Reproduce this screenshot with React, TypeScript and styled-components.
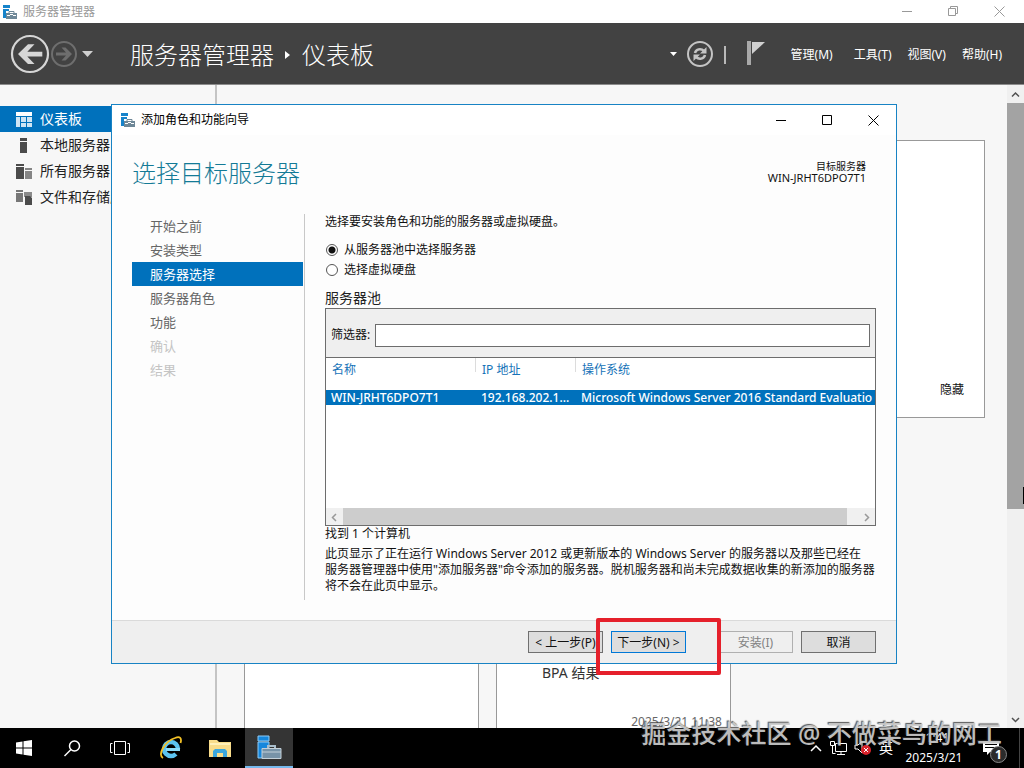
import React from 'react';
import styled, { createGlobalStyle, css } from 'styled-components';

const GlobalStyle = createGlobalStyle`
  * { box-sizing: border-box; }
  html, body { margin: 0; height: 100%; overflow: hidden; }
  body {
    font: 12px/16px "Noto Sans", "Noto Sans CJK SC", sans-serif;
    color: #111;
    background: #f7f7f7;
  }
  button, input { font: inherit; color: inherit; }
  #root { height: 100%; }
`;

const Desktop = styled.div`
  position: relative;
  display: flex;
  flex-direction: column;
  height: 100vh;
  overflow: hidden;
`;

const PlainButton = styled.button`
  display: flex;
  align-items: center;
  justify-content: center;
  padding: 0;
  border: 0;
  background: none;
`;

/* Title bars */
const TitleBar = styled.div`
  display: flex;
  align-items: center;
  flex: none;
  height: 23px;
  padding: 0 2px;
  gap: 6px;
  background: #fff;
  color: #999;
`;

const DialogTitleBar = styled(TitleBar)`
  height: 30px;
  padding: 0 0 0 8px;
  color: #000;
`;

const WindowButtons = styled.div`
  display: flex;
  margin-left: auto;
`;

const WindowButton = styled(PlainButton)`
  width: 46px;
  height: 22px;
`;

/* Server manager header */
const Header = styled.header`
  display: flex;
  align-items: center;
  flex: none;
  height: 62px;
  padding: 0 22px 0 10px;
  background: #424242;
  border-bottom: 1px solid #8c8c8c;
  color: #fff;
`;

const Breadcrumb = styled.h1`
  display: flex;
  align-items: center;
  gap: 11px;
  margin: 0 0 0 36px;
  padding-top: 2px;
  font-size: 24px;
  line-height: 32px;
  font-weight: 300;
`;

const HeaderTools = styled.div`
  display: flex;
  align-items: center;
  margin-left: auto;
  margin-right: 26px;
`;

const Menu = styled.nav`
  display: flex;
  gap: 16px;
  padding-top: 2px;
`;

const MenuItem = styled(PlainButton)`
  &:first-child { margin-right: 5px; }
`;

/* Body */
const Body = styled.div`
  display: flex;
  flex: 1;
  min-height: 0;
  overflow: hidden;
`;

const Sidebar = styled.nav`
  flex: none;
  width: 217px;
  padding-top: 21px;
  border-right: 2px solid #c4c4c4;
`;

const SideLink = styled.a<{ $active?: boolean }>`
  display: flex;
  align-items: center;
  gap: 8px;
  height: 26px;
  padding-left: 16px;
  font-size: 14px;
  color: ${p => (p.$active ? '#fff' : '#222')};
  background: ${p => (p.$active ? '#0071bc' : 'transparent')};
  text-decoration: none;
`;

const Content = styled.main`
  flex: 1;
  min-width: 0;
  padding: 55px 22px 0 27px;
`;

const Welcome = styled.section`
  display: flex;
  align-items: flex-end;
  justify-content: flex-end;
  height: 278px;
  padding: 19px 20px;
  border: 1px solid #999;
  background: #fff;
`;

const Tiles = styled.div`
  display: flex;
  gap: 17px;
  margin-top: 140px;
`;

const Tile = styled.article`
  display: flex;
  flex-direction: column;
  width: 235px;
  height: 180px;
  padding: 106px 8px 4px 45px;
  border: 1px solid #999;
  background: #fff;
  font-size: 14px;
  color: #333;
`;

const TileTime = styled.time`
  margin-top: 33px;
  text-align: right;
  font-size: 12px;
  color: #666;
`;

const VScroll = styled.div`
  display: flex;
  flex-direction: column;
  flex: none;
  width: 17px;
  background: #f0f0f0;
`;

const VThumb = styled.div`
  height: 406px;
  margin-bottom: auto;
  background: #a3a3a3;
`;

const ScrollButton = styled(PlainButton)`
  width: 17px;
  height: 18px;
`;

/* Wizard window */
const Dialog = styled.section`
  position: absolute;
  top: 104px;
  left: 111px;
  right: 127px;
  display: flex;
  flex-direction: column;
  border: 1px solid #1883c4;
  background: #fdfdfd;
`;

const DialogHead = styled.div`
  display: flex;
  justify-content: space-between;
  height: 79px;
  padding: 22px 30px 0 20px;
`;

const DialogTitle = styled.h2`
  margin: 0;
  font-size: 24px;
  line-height: 32px;
  font-weight: 300;
  color: #147a96;
`;

const Target = styled.div`
  display: flex;
  flex-direction: column;
  align-items: flex-end;
  padding-top: 3px;
  font-size: 11px;
  line-height: 12px;
`;

const TargetLabel = styled.span`
  font-size: 10px;
`;

const DialogBody = styled.div`
  display: flex;
  height: 406px;
  padding: 0 20px;
`;

const Steps = styled.ol`
  flex: none;
  width: 173px;
  height: 386px;
  margin: 0;
  padding: 0 1px 0 0;
  border-right: 1px solid #c8c8c8;
  list-style: none;
`;

const Step = styled.li<{ $state?: 'active' | 'disabled' }>`
  height: 24px;
  padding-left: 18px;
  font-size: 13px;
  line-height: 24px;
  color: #666;
  ${p => p.$state === 'active' && css`background: #0071bc; color: #fff;`}
  ${p => p.$state === 'disabled' && css`color: #c4c4c4;`}
`;

const Pane = styled.div`
  flex: 1;
  min-width: 0;
  padding-left: 20px;
`;

const Text = styled.p`
  margin: 0;
`;

const Choices = styled.div`
  display: flex;
  flex-direction: column;
  gap: 4px;
  margin: 12px 0;
`;

const Choice = styled.label`
  display: flex;
  align-items: center;
  gap: 6px;
  padding-left: 1px;
`;

const Radio = styled.input`
  appearance: none;
  width: 12px;
  height: 12px;
  margin: 0;
  border: 1px solid #555;
  border-radius: 50%;
  background: #fff;
  &:checked { background: radial-gradient(circle, #111 0 3px, #fff 4px); }
`;

const PoolTitle = styled.h3`
  margin: 0;
  font-size: 14px;
  line-height: 16px;
  font-weight: 400;
  padding-bottom: 2px;
  color: #222;
`;

const Pool = styled.div`
  height: 218px;
  display: flex;
  flex-direction: column;
  border: 1px solid #6d6d6d;
  background: #fff;
`;

const Filter = styled.label`
  display: flex;
  align-items: center;
  flex: none;
  gap: 5px;
  height: 49px;
  padding: 4px 5px 0;
  border-bottom: 1px solid #6d6d6d;
  background: #efefef;
`;

const FilterInput = styled.input`
  flex: 1;
  min-width: 0;
  height: 23px;
  border: 1px solid #6d6d6d;
  background: #fff;
`;

const TableView = styled.div`
  flex: 1;
  overflow: hidden;
`;

const ServerTable = styled.table`
  width: 100%;
  table-layout: fixed;
  border-collapse: collapse;
  th {
    height: 32px;
    padding: 4px 6px 0;
    vertical-align: top;
    text-align: left;
    font-weight: 400;
    color: #1673b8;
    background: linear-gradient(#dcdcdc, #dcdcdc) right top / 1px 14px no-repeat;
  }
  th:last-child { background: none; }
  td {
    height: 15px;
    padding: 0 5px;
    line-height: 15px;
    white-space: nowrap;
    overflow: hidden;
    font-weight: 500;
    color: #fff;
    background: #0071bc;
  }
  td:last-child { padding-right: 0; }
`;

const Col = styled.col<{ $width?: number }>`
  ${p => p.$width && css`width: ${p.$width}px;`}
`;

const HScroll = styled.div`
  display: flex;
  flex: none;
  height: 17px;
  background: #f0f0f0;
`;

const HThumb = styled.div`
  flex: 1;
  margin-right: 11px;
  background: #cdcdcd;
`;

const Note = styled.p`
  margin: 4px 0 0;
`;

const DialogFooter = styled.footer`
  display: flex;
  align-items: center;
  justify-content: flex-end;
  gap: 8px;
  height: 43px;
  padding: 0 20px;
  border-top: 1px solid #dadada;
  background: #efefef;
`;

const PushButton = styled.button<{ $primary?: boolean; $spaced?: boolean }>`
  width: 75px;
  height: 22px;
  padding: 2px 0 0;
  border: 1px solid ${p => (p.$primary ? '#0078d7' : '#707070')};
  background: #dddddd;
  white-space: nowrap;
  &:disabled { border-color: #b0b0b0; background: #efefef; color: #838383; }
  ${p => p.$spaced && css`margin-right: 24px;`}
`;

const Highlight = styled.div`
  position: absolute;
  left: 596px;
  top: 618px;
  width: 125px;
  height: 57px;
  border: 4px solid #e5202b;
  border-radius: 2px;
  pointer-events: none;
`;

/* Taskbar */
const Taskbar = styled.footer`
  display: flex;
  flex: none;
  height: 40px;
  background: #000;
  color: #fff;
`;

const Pinned = styled.div`
  display: flex;
  gap: 1px;
  margin-left: 3px;
`;

const TaskButton = styled(PlainButton)<{ $running?: boolean }>`
  width: 48px;
  ${p => p.$running && css`background: #343434; border-bottom: 2px solid #76b9ed;`}
`;

const Tray = styled.div`
  display: flex;
  align-items: center;
  gap: 7px;
  margin-left: auto;
`;

const InputMode = styled.span`
  font-size: 14px;
`;

const Clock = styled.time`
  display: flex;
  flex-direction: column;
  align-items: center;
  width: 64px;
  margin-left: 2px;
  line-height: 20px;
`;

const Notices = styled(PlainButton)`
  position: relative;
  justify-content: flex-start;
  width: 42px;
  height: 40px;
  margin-right: 4px;
  margin-left: 5px;
  border-right: 1px solid #444;
`;

const Badge = styled.span`
  position: absolute;
  left: 12px;
  top: 18px;
  width: 17px;
  height: 17px;
  border: 1px solid #888;
  border-radius: 50%;
  background: #2b2b2b;
  line-height: 15px;
  font-weight: 700;
  text-align: center;
`;

const Watermark = styled.div`
  position: absolute;
  right: 22px;
  bottom: 18px;
  font-size: 25px;
  line-height: 34px;
  font-weight: 500;
  white-space: nowrap;
  color: rgba(205, 205, 205, 0.92);
  text-shadow: -1px -1px 1px rgba(50, 50, 50, 0.8);
  pointer-events: none;
`;

const Pointer = styled.div`
  position: absolute;
  right: 0;
  top: 487px;
  width: 1px;
  height: 17px;
  background: #000;
`;

const ServerIcon = () => (
  <svg width="15" height="14" viewBox="0 0 15 14">
    <path d="M1 0h7v3H1zM1 4h6v2H4v7H1z" fill="#1683ca" />
    <path d="M4 8h11v6H4z" fill="#6e8797" />
    <path d="M7 8V6.500h5V8" fill="none" stroke="#6e8797" />
    <path d="M5 10.500h3M11 10.500h3M8 9.500h3" stroke="#fff" />
  </svg>
);

const MinIcon = () => <svg width="11" height="11" stroke="currentColor"><path d="M0 5.5h10" /></svg>;
const MaxIcon = () => <svg width="11" height="11" fill="none" stroke="currentColor"><path d="M.5.5h9v9h-9z" /></svg>;
const RestoreIcon = () => <svg width="11" height="11" fill="none" stroke="currentColor"><path d="M.5 2.5h7v7h-7zM2.5 2.5v-2h7v7h-2" /></svg>;
const CloseIcon = () => <svg width="11" height="11" fill="none" stroke="currentColor"><path d="M.5.5l10 10M10.500.5l-10 10" /></svg>;

const Chevron = ({ d, color = '#505050' }: { d: string; color?: string }) => (
  <svg width="9" height="9" fill="none" stroke={color} strokeWidth="1.5"><path d={d} /></svg>
);

const sideItems = [
  { label: '仪表板', icon: <><path d="M0 0h16v4H0z" fill="#fff" /><path d="M0 5h4v10H0zM5 5h5v5H5zM11 5h5v5h-5zM5 11h5v4H5zM11 11h5v4h-5z" fill="#cfe5f4" /></> },
  { label: '本地服务器', icon: <path d="M4 0h7v3H4zM4 4h7v11H4z" fill="#4b4b4b" /> },
  { label: '所有服务器', icon: <><path d="M0 0h8v2H0zM0 3h8v12H0z" fill="#4b4b4b" /><path d="M9 4h7v2H9zM9 7h7v8H9z" fill="#858585" /></> },
  { label: '文件和存储服务', icon: <><path d="M0 0h7v2H0zM0 3h7v9H0z" fill="#777" /><path d="M8 2h8v5H8z" fill="#8a8a8a" /><path d="M9 6h5l2 2v7H9z" fill="#4b4b4b" /></> },
];

const steps: { label: string; state?: 'active' | 'disabled' }[] = [
  { label: '开始之前' },
  { label: '安装类型' },
  { label: '服务器选择', state: 'active' },
  { label: '服务器角色' },
  { label: '功能' },
  { label: '确认', state: 'disabled' },
  { label: '结果', state: 'disabled' },
];

export default function App() {
  return (
    <Desktop>
      <GlobalStyle />
      <TitleBar>
        <ServerIcon />
        服务器管理器
        <WindowButtons>
          <WindowButton aria-label="最小化"><MinIcon /></WindowButton>
          <WindowButton aria-label="还原"><RestoreIcon /></WindowButton>
          <WindowButton aria-label="关闭"><CloseIcon /></WindowButton>
        </WindowButtons>
      </TitleBar>

      <Header>
        <PlainButton aria-label="后退">
          <svg width="40" height="40">
            <circle cx="20" cy="20" r="18" fill="none" stroke="#d6d6d6" strokeWidth="2.200" />
            <path d="M8 20l10-9.700h6.500l-7.200 7.400h15v4.800h-15l7.200 7.500H18z" fill="#d6d6d6" />
          </svg>
        </PlainButton>
        <PlainButton aria-label="前进">
          <svg width="28" height="28">
            <circle cx="14" cy="14" r="12" fill="none" stroke="#6e6e6e" strokeWidth="2" />
            <path d="M22 14l-6.500 6.500h-4l4.500-5H6v-3h10l-4.500-5h4z" fill="#6e6e6e" />
          </svg>
        </PlainButton>
        <PlainButton aria-label="历史记录">
          <svg width="16" height="8"><path d="M4 1h11L9.500 7z" fill="#cfcfcf" /></svg>
        </PlainButton>
        <Breadcrumb>
          服务器管理器
          <svg width="6" height="10"><path d="M0 1l5 4-5 4z" fill="#fff" /></svg>
          仪表板
        </Breadcrumb>
        <HeaderTools>
          <PlainButton aria-label="更多"><svg width="16" height="6"><path d="M0 1h7L3.500 5z" fill="#fff" /></svg></PlainButton>
          <PlainButton aria-label="刷新">
            <svg width="28" height="28">
              <circle cx="14" cy="14" r="12" fill="none" stroke="#c4c4c4" strokeWidth="2" />
              <path d="M9 13c1-4 6-5 9-2M19 15c-1 4-6 5-9 2" fill="none" stroke="#c4c4c4" strokeWidth="2.500" />
              <path d="M20.500 7v6.500H14zM7.500 21v-6.500H14z" fill="#c4c4c4" />
            </svg>
          </PlainButton>
          <svg width="51" height="30"><path d="M10 7h2v18h-2z" fill="#b9b9b9" /><path d="M33 2h4v24h-4z" fill="#a9a9a9" /><path d="M38 3h13L38 15z" fill="#d0d0d0" /></svg>
        </HeaderTools>
        <Menu>
          <MenuItem>管理(M)</MenuItem>
          <MenuItem>工具(T)</MenuItem>
          <MenuItem>视图(V)</MenuItem>
          <MenuItem>帮助(H)</MenuItem>
        </Menu>
      </Header>

      <Body>
        <Sidebar>
          {sideItems.map((item, i) => (
            <SideLink key={item.label} href="#" $active={i === 0}>
              <svg width="16" height="15">{item.icon}</svg>
              {item.label}
            </SideLink>
          ))}
        </Sidebar>
        <Content>
          <Welcome><PlainButton>隐藏</PlainButton></Welcome>
          <Tiles>
            <Tile />
            <Tile>BPA 结果<TileTime>2025/3/21 11:38</TileTime></Tile>
          </Tiles>
        </Content>
        <VScroll>
          <ScrollButton aria-label="向上滚动"><Chevron d="M1 6.500L4.500 3 8 6.500" /></ScrollButton>
          <VThumb />
          <ScrollButton aria-label="向下滚动"><Chevron d="M1 3L4.500 6.500 8 3" /></ScrollButton>
        </VScroll>
      </Body>

      <Dialog role="dialog" aria-label="添加角色和功能向导">
        <DialogTitleBar>
          <ServerIcon />
          添加角色和功能向导
          <WindowButtons>
            <WindowButton aria-label="最小化"><MinIcon /></WindowButton>
            <WindowButton aria-label="最大化"><MaxIcon /></WindowButton>
            <WindowButton aria-label="关闭"><CloseIcon /></WindowButton>
          </WindowButtons>
        </DialogTitleBar>
        <DialogHead>
          <DialogTitle>选择目标服务器</DialogTitle>
          <Target><TargetLabel>目标服务器</TargetLabel><span>WIN-JRHT6DPO7T1</span></Target>
        </DialogHead>
        <DialogBody>
          <Steps>
            {steps.map(s => <Step key={s.label} $state={s.state}>{s.label}</Step>)}
          </Steps>
          <Pane>
            <Text>选择要安装角色和功能的服务器或虚拟硬盘。</Text>
            <Choices>
              <Choice><Radio type="radio" name="source" defaultChecked />从服务器池中选择服务器</Choice>
              <Choice><Radio type="radio" name="source" />选择虚拟硬盘</Choice>
            </Choices>
            <PoolTitle>服务器池</PoolTitle>
            <Pool>
              <Filter>筛选器:<FilterInput type="text" /></Filter>
              <TableView>
                <ServerTable>
                  <colgroup><Col $width={150} /><Col $width={100} /><Col /></colgroup>
                  <thead><tr><th>名称</th><th>IP 地址</th><th>操作系统</th></tr></thead>
                  <tbody>
                    <tr><td>WIN-JRHT6DPO7T1</td><td>192.168.202.1...</td><td>Microsoft Windows Server 2016 Standard Evaluatio</td></tr>
                  </tbody>
                </ServerTable>
              </TableView>
              <HScroll>
                <ScrollButton aria-label="向左滚动"><Chevron d="M6 1L2.500 4.500 6 8" color="#999" /></ScrollButton>
                <HThumb />
                <ScrollButton aria-label="向右滚动"><Chevron d="M3 1l3.500 3.500L3 8" color="#999" /></ScrollButton>
              </HScroll>
            </Pool>
            <Text>找到 1 个计算机</Text>
            <Note>
              此页显示了正在运行 Windows Server 2012 或更新版本的 Windows Server 的服务器以及那些已经在<br />
              服务器管理器中使用"添加服务器"命令添加的服务器。脱机服务器和尚未完成数据收集的新添加的服务器将不会在此页中显示。
            </Note>
          </Pane>
        </DialogBody>
        <DialogFooter>
          <PushButton>&lt; 上一步(P)</PushButton>
          <PushButton $primary $spaced>下一步(N) &gt;</PushButton>
          <PushButton disabled>安装(I)</PushButton>
          <PushButton>取消</PushButton>
        </DialogFooter>
      </Dialog>

      <Taskbar>
        <TaskButton aria-label="开始">
          <svg width="16" height="16" fill="#fff"><path d="M0 2.500l6.500-1v6H0zM7.500 1.300L16 0v7.500H7.500zM0 8.500h6.500v6l-6.500-1zM7.500 8.500H16V16l-8.500-1.200z" /></svg>
        </TaskButton>
        <TaskButton aria-label="搜索">
          <svg width="17" height="17" fill="none" stroke="#fff" strokeWidth="1.500"><circle cx="10.500" cy="6" r="5" /><path d="M7 9.500L.5 16" /></svg>
        </TaskButton>
        <TaskButton aria-label="任务视图">
          <svg width="20" height="15" fill="none" stroke="#fff"><path d="M4.500.5h11v13h-11zM2.500 2.500h-2v9h2M17.500 2.500h2v9h-2" /></svg>
        </TaskButton>
        <Pinned>
          <TaskButton aria-label="Internet Explorer">
            <svg width="24" height="24" fill="none">
              <circle cx="12" cy="13" r="7" stroke="#5cc4f1" strokeWidth="4.500" strokeDasharray="38.600 6" strokeDashoffset="-5.500" />
              <path d="M7 13.500h14" stroke="#8bdcf9" strokeWidth="3" />
              <path d="M4 22C-2 19 6 5 16 2c5-2 7 0 5.500 5" stroke="#f3c126" strokeWidth="1.800" />
            </svg>
          </TaskButton>
          <TaskButton aria-label="文件资源管理器">
            <svg width="22" height="19"><path d="M0 1h8l2 2h12v15H0z" fill="#f8dc8a" /><path d="M1 4h20v2H1z" fill="#fff0b8" /><path d="M4 18v-6l2-2h10l2 2v6h-4v-4H8v4z" fill="#3aa6dc" /></svg>
          </TaskButton>
          <TaskButton aria-label="服务器管理器" $running>
            <svg width="25" height="25"><path d="M1 1h11v5H1zM1 7h11v16H1z" fill="#1687dc" stroke="#8ecbf5" strokeWidth="1" /><path d="M11 13v-2h7v2" fill="none" stroke="#a9bdcb" strokeWidth="2" /><path d="M5 13.500h19v10H5z" fill="#7793a8" stroke="#c3d0d9" /><path d="M5 17h19" stroke="#c3d0d9" /></svg>
          </TaskButton>
        </Pinned>
        <Tray>
          <svg width="13" height="8" fill="none" stroke="#fff" strokeWidth="1.500"><path d="M1 7l5-5 5 5" /></svg>
          <svg width="17" height="15" fill="none" stroke="#fff"><path d="M5.500 2.500h11v8h-11zM.5.5h4v4h-4zM2.500 4.500v8h3M11 10.500v3M7 13.500h8" /></svg>
          <svg width="18" height="16"><path d="M1 5h3l4-4v12L4 9H1z" fill="none" stroke="#fff" /><circle cx="12" cy="10" r="5" fill="#d9232b" /><path d="M10 8l4 4M14 8l-4 4" stroke="#fff" /></svg>
          <InputMode>英</InputMode>
          <Clock><span>11:41</span><span>2025/3/21</span></Clock>
          <Notices aria-label="通知">
            <svg width="30" height="40"><path d="M5 13h16v11h-9l-3 3v-3H5z" fill="#fff" /><path d="M7 16.500h12M7 19.500h12" stroke="#000" /></svg>
            <Badge>1</Badge>
          </Notices>
        </Tray>
      </Taskbar>

      <Highlight />
      <Pointer />
      <Watermark>掘金技术社区 @ 不做菜鸟的网工</Watermark>
    </Desktop>
  );
}
